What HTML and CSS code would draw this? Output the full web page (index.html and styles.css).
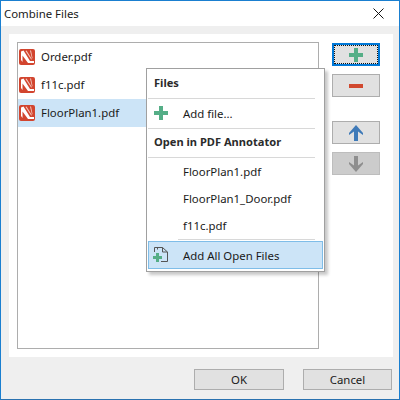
FILE: index.html
```html
<!DOCTYPE html>
<html>
<head>
<meta charset="utf-8">
<title>Combine Files</title>
<link rel="stylesheet" href="styles.css">
</head>
<body>
<svg class="defs" width="0" height="0">
  <symbol id="pdf" viewBox="0 0 16 16">
    <rect x="0" y="0" width="16" height="16" rx="2" fill="#d2452f"/>
    <path d="M2 2.500 L4.500 1.500 L11 12 L15 12 L15 14 L9 14 L3.500 6.500 L3.500 13 L2 11 Z" fill="#fff"/>
    <path d="M7.500 1.500 L12.500 9.500 L12.500 11 L6.500 2 Z" fill="#f4cfc5"/>
    <path d="M11 1.500 L12 1.500 L13.500 9 L13 9.500 Z" fill="#f4cfc5"/>
  </symbol>
  <symbol id="plus" viewBox="0 0 14 14">
    <path d="M5 0H9V5H14V9H9V14H5V9H0V5H5Z" fill="#55ae87"/>
  </symbol>
</svg>
<div class="window">
  <header class="titlebar">
    <span class="title">Combine Files</span>
    <svg class="close" width="11" height="11" viewBox="0 0 11 11"><path d="M.5.5l10 10M10.500.5l-10 10" stroke="#111" stroke-width="1" fill="none"/></svg>
  </header>
  <main class="client">
    <section class="panel">
      <div class="listbox">
        <div class="file"><svg class="file-icon"><use href="#pdf"/></svg><span>Order.pdf</span></div>
        <div class="file"><svg class="file-icon"><use href="#pdf"/></svg><span>f11c.pdf</span></div>
        <div class="file selected"><svg class="file-icon"><use href="#pdf"/></svg><span>FloorPlan1.pdf</span></div>
      </div>
      <div class="side">
        <button class="tool focused"><span class="focus-ring"><svg width="14" height="14"><use href="#plus"/></svg></span></button>
        <button class="tool"><svg width="14" height="4" viewBox="0 0 14 4"><rect width="14" height="4" fill="#d1492f"/></svg></button>
        <button class="tool gap-up"><svg width="14" height="16" viewBox="0 0 14 16"><path d="M7 0L14 8V10L9 6.500V16H5V6.500L0 10V8Z" fill="#3f7ab8"/></svg></button>
        <button class="tool disabled"><svg width="14" height="16" viewBox="0 0 14 16"><path d="M7 16L14 8V6L9 9.500V0H5V9.500L0 6V8Z" fill="#8e8e8e"/></svg></button>
      </div>
      <nav class="menu">
        <div class="menu-head">Files</div>
        <div class="rule"></div>
        <div class="menu-item add"><svg class="menu-icon" width="14" height="14"><use href="#plus"/></svg><span>Add file...</span></div>
        <div class="rule"></div>
        <div class="menu-head">Open in PDF Annotator</div>
        <div class="rule"></div>
        <div class="menu-item">FloorPlan1.pdf</div>
        <div class="menu-item">FloorPlan1_Door.pdf</div>
        <div class="menu-item">f11c.pdf</div>
        <div class="rule short"></div>
        <div class="menu-item active">
          <svg class="menu-icon" width="16" height="16" viewBox="0 0 16 16">
            <path d="M1.500 6V1.500H9.500L14.500 6V15.500H8" fill="none" stroke="#555" stroke-width="1"/>
            <path d="M4.500 3.500V1.500M9.500 1.500V6H14.500" fill="none" stroke="#555" stroke-width="1"/>
            <path d="M3 7H6V10H9V13H6V16H3V13H0V10H3Z" fill="#55ae87"/>
          </svg>
          <span>Add All Open Files</span>
        </div>
      </nav>
    </section>
    <footer class="actions">
      <button class="push ok">OK</button>
      <button class="push cancel">Cancel</button>
    </footer>
  </main>
</div>
</body>
</html>
```
FILE: styles.css
```css
* { box-sizing: border-box; }
html, body { margin: 0; padding: 0; }
body {
  width: 400px;
  height: 400px;
  overflow: hidden;
  font-family: "Noto Sans", "Open Sans", sans-serif;
  font-size: 11.4px;
  color: #1a1a1a;
}
.defs { position: absolute; }
.window {
  width: 400px;
  height: 400px;
  display: flex;
  flex-direction: column;
  border: 1px solid #1a7fd0;
  border-bottom-color: #2a72b0;
}
.titlebar {
  height: 25px;
  flex: none;
  background: #fff;
  display: flex;
  align-items: center;
  justify-content: space-between;
  padding: 0 15px 0 3px;
}
.title { font-size: 11.4px; padding-bottom: 1px; }
.client {
  flex: 1;
  background: #efefef;
  padding: 8px 6px 0 8px;
  display: flex;
  flex-direction: column;
}
.panel {
  position: relative;
  height: 323px;
  background: #fff;
  padding: 8px 13px 8px 8px;
  display: flex;
  gap: 13px;
}
.listbox {
  width: 302px;
  border: 1px solid #adadad;
  background: #fff;
}
.file {
  height: 28px;
  display: flex;
  align-items: center;
  gap: 6px;
  padding-left: 1px;
}
.file span { padding-bottom: 1px; }
.file.selected { background: #cce4f7; }
.file-icon { width: 16px; height: 16px; flex: none; }
.side {
  width: 48px;
  display: flex;
  flex-direction: column;
  gap: 8px;
  padding-top: 1px;
}
.tool {
  width: 48px;
  height: 23px;
  padding: 0;
  background: #e1e1e1;
  border: 1px solid #adadad;
  display: flex;
  align-items: center;
  justify-content: center;
}
.tool.focused { border: 2px solid #0078d7; }
.focus-ring {
  width: 100%;
  height: 100%;
  border: 1px dotted #111;
  display: flex;
  align-items: center;
  justify-content: center;
}
.tool.gap-up { margin-top: 16px; }
.tool.disabled { background: #cccccc; border-color: #bdbdbd; }
.menu {
  position: absolute;
  left: 137px;
  top: 34px;
  width: 179px;
  height: 204px;
  background: #fff;
  border: 1px solid #a0a0a0;
  box-shadow: 3px 3px 3px rgba(0, 0, 0, .22);
  padding: 1px;
  display: flex;
  flex-direction: column;
}
.menu-head {
  height: 28px;
  flex: none;
  display: flex;
  align-items: center;
  padding: 0 0 3px 6px;
  font-size: 11.1px;
  font-weight: 700;
  color: #2b2b2b;
}
.rule {
  height: 1px;
  flex: none;
  margin-right: 8px;
  background: #d8d8d8;
}
.rule.short { margin-left: 30px; }
.menu-item {
  height: 27px;
  flex: none;
  display: flex;
  align-items: center;
  padding-left: 35px;
  position: relative;
}
.menu-item.add { height: 29px; }
.menu-item.active {
  height: 28px;
  margin-top: 1px;
  background: #cce4f7;
  border: 1px solid #7fbde8;
  padding-left: 34px;
}
.menu-icon { position: absolute; left: 6px; top: 7px; }
.active .menu-icon { left: 4px; top: 4px; }
.actions {
  flex: 1;
  display: flex;
  justify-content: flex-end;
  gap: 19px;
  padding: 12px 1px 0 0;
}
.push {
  height: 21px;
  padding: 0;
  font: inherit;
  color: #1a1a1a;
  background: #e1e1e1;
  border: 1px solid #adadad;
}
.ok { width: 90px; }
.cancel { width: 89px; }
```
